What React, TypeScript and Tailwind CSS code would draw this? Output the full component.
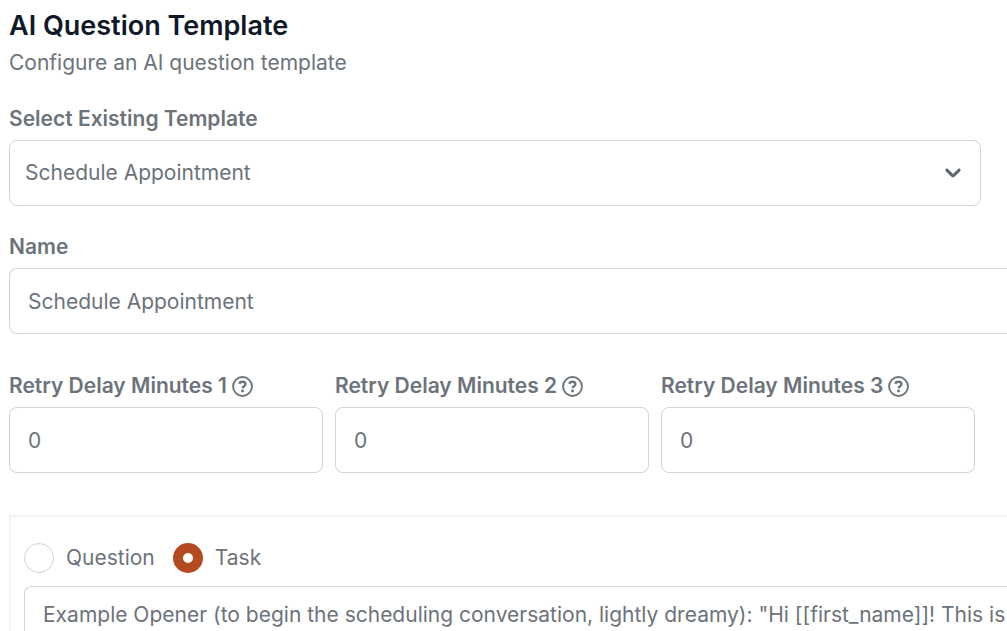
import React, { useState } from 'react';

const opener =
  'Example Opener (to begin the scheduling conversation, lightly dreamy): "Hi [[first_name]]! This is';

const labelClass = 'flex items-center text-[21px] leading-[26px] font-semibold text-[#6c737b]';

const HelpIcon: React.FC = () => (
  <svg viewBox="0 0 20 20" fill="none" stroke="currentColor" aria-hidden="true" className="size-[21px]">
    <circle cx="10" cy="10" r="9" strokeWidth="1.8" />
    <path d="M7 7.5C7.3 6.2 8.4 5.5 9.9 5.5c1.7 0 2.9.9 2.9 2.3 0 2-2.7 2-2.7 3.9" strokeWidth="2.2" />
    <circle cx="10" cy="14.3" r="1.4" fill="currentColor" stroke="none" />
  </svg>
);

const RetryDelay: React.FC<{ index: number }> = ({ index }) => {
  const [value, setValue] = useState('0');
  const id = `retry-delay-${index}`;

  return (
    <div className="flex flex-col gap-2">
      <label htmlFor={id} className={`${labelClass} gap-[5px]`}>
        Retry Delay Minutes {index}
        <HelpIcon />
      </label>
      <input
        id={id}
        type="text"
        inputMode="numeric"
        value={value}
        onChange={(e) => setValue(e.target.value)}
        className="h-[66px] w-full rounded-lg border border-[#d2d4d6] px-[18px] text-[21px]"
      />
    </div>
  );
};

const App: React.FC = () => {
  const [template, setTemplate] = useState('Schedule Appointment');
  const [name, setName] = useState('Schedule Appointment');
  const [kind, setKind] = useState('task');
  const [text, setText] = useState(opener);

  const radioClass =
    'size-[30px] appearance-none rounded-full border border-[#d2d4d6] bg-white checked:border-[10px] checked:border-[#b44a20]';

  return (
    <main className="flex h-screen flex-col overflow-hidden bg-white pt-2 pl-[9px] font-['Inter',sans-serif] text-[#6c737b]">
      <header className="flex flex-col gap-0.5">
        <h1 className="text-[27px] leading-9 font-semibold text-[#111827]">AI Question Template</h1>
        <p className="text-[21px] leading-[34px]">Configure an AI question template</p>
      </header>

      <div className="mt-[26px] mr-[26px] flex flex-col gap-2">
        <label htmlFor="template" className={labelClass}>
          Select Existing Template
        </label>
        <div className="grid items-center">
          <select
            id="template"
            value={template}
            onChange={(e) => setTemplate(e.target.value)}
            className="col-start-1 row-start-1 h-[66px] w-full appearance-none rounded-lg border border-[#d2d4d6] bg-white px-[15px] text-[21px]"
          >
            <option>Schedule Appointment</option>
          </select>
          <svg viewBox="0 0 20 20" fill="#5f636b" aria-hidden="true" className="pointer-events-none col-start-1 row-start-1 mr-[15px] size-[26px] justify-self-end">
            <path d="M4.516 6.948c0.436-0.446 1.043-0.481 1.576 0l3.908 3.747 3.908-3.747c0.533-0.481 1.141-0.446 1.574 0 0.436 0.445 0.408 1.197 0 1.615-0.406 0.418-4.695 4.502-4.695 4.502-0.217 0.223-0.502 0.335-0.787 0.335s-0.57-0.112-0.789-0.335c0 0-4.287-4.084-4.695-4.502s-0.436-1.17 0-1.615z" />
          </svg>
        </div>
      </div>

      <div className="mt-7 flex flex-col gap-2">
        <label htmlFor="name" className={labelClass}>
          Name
        </label>
        <input
          id="name"
          type="text"
          value={name}
          onChange={(e) => setName(e.target.value)}
          className="h-[66px] w-full rounded-l-lg border border-r-0 border-[#d2d4d6] px-[18px] text-[21px]"
        />
      </div>

      <div className="mt-[39px] mr-8 grid grid-cols-3 gap-3">
        <RetryDelay index={1} />
        <RetryDelay index={2} />
        <RetryDelay index={3} />
      </div>

      <section className="mt-[42px] flex grow flex-col border-t-2 border-l-2 border-[#f1f2f3] pt-[25px] pl-[13px]">
        <div className="flex items-center gap-[18px] text-[21px]">
          <label className="flex items-center gap-3">
            <input type="radio" name="kind" checked={kind === 'question'} onChange={() => setKind('question')} className={radioClass} />
            Question
          </label>
          <label className="flex items-center gap-3">
            <input type="radio" name="kind" checked={kind === 'task'} onChange={() => setKind('task')} className={radioClass} />
            Task
          </label>
        </div>
        <textarea
          aria-label="Task text"
          wrap="off"
          value={text}
          onChange={(e) => setText(e.target.value)}
          className="mt-3 h-40 shrink-0 resize-none overflow-hidden rounded-tl-lg border border-r-0 border-[#d2d4d6] py-3 pl-[18px] text-[21px] leading-8"
        />
      </section>
    </main>
  );
};

export default App;
